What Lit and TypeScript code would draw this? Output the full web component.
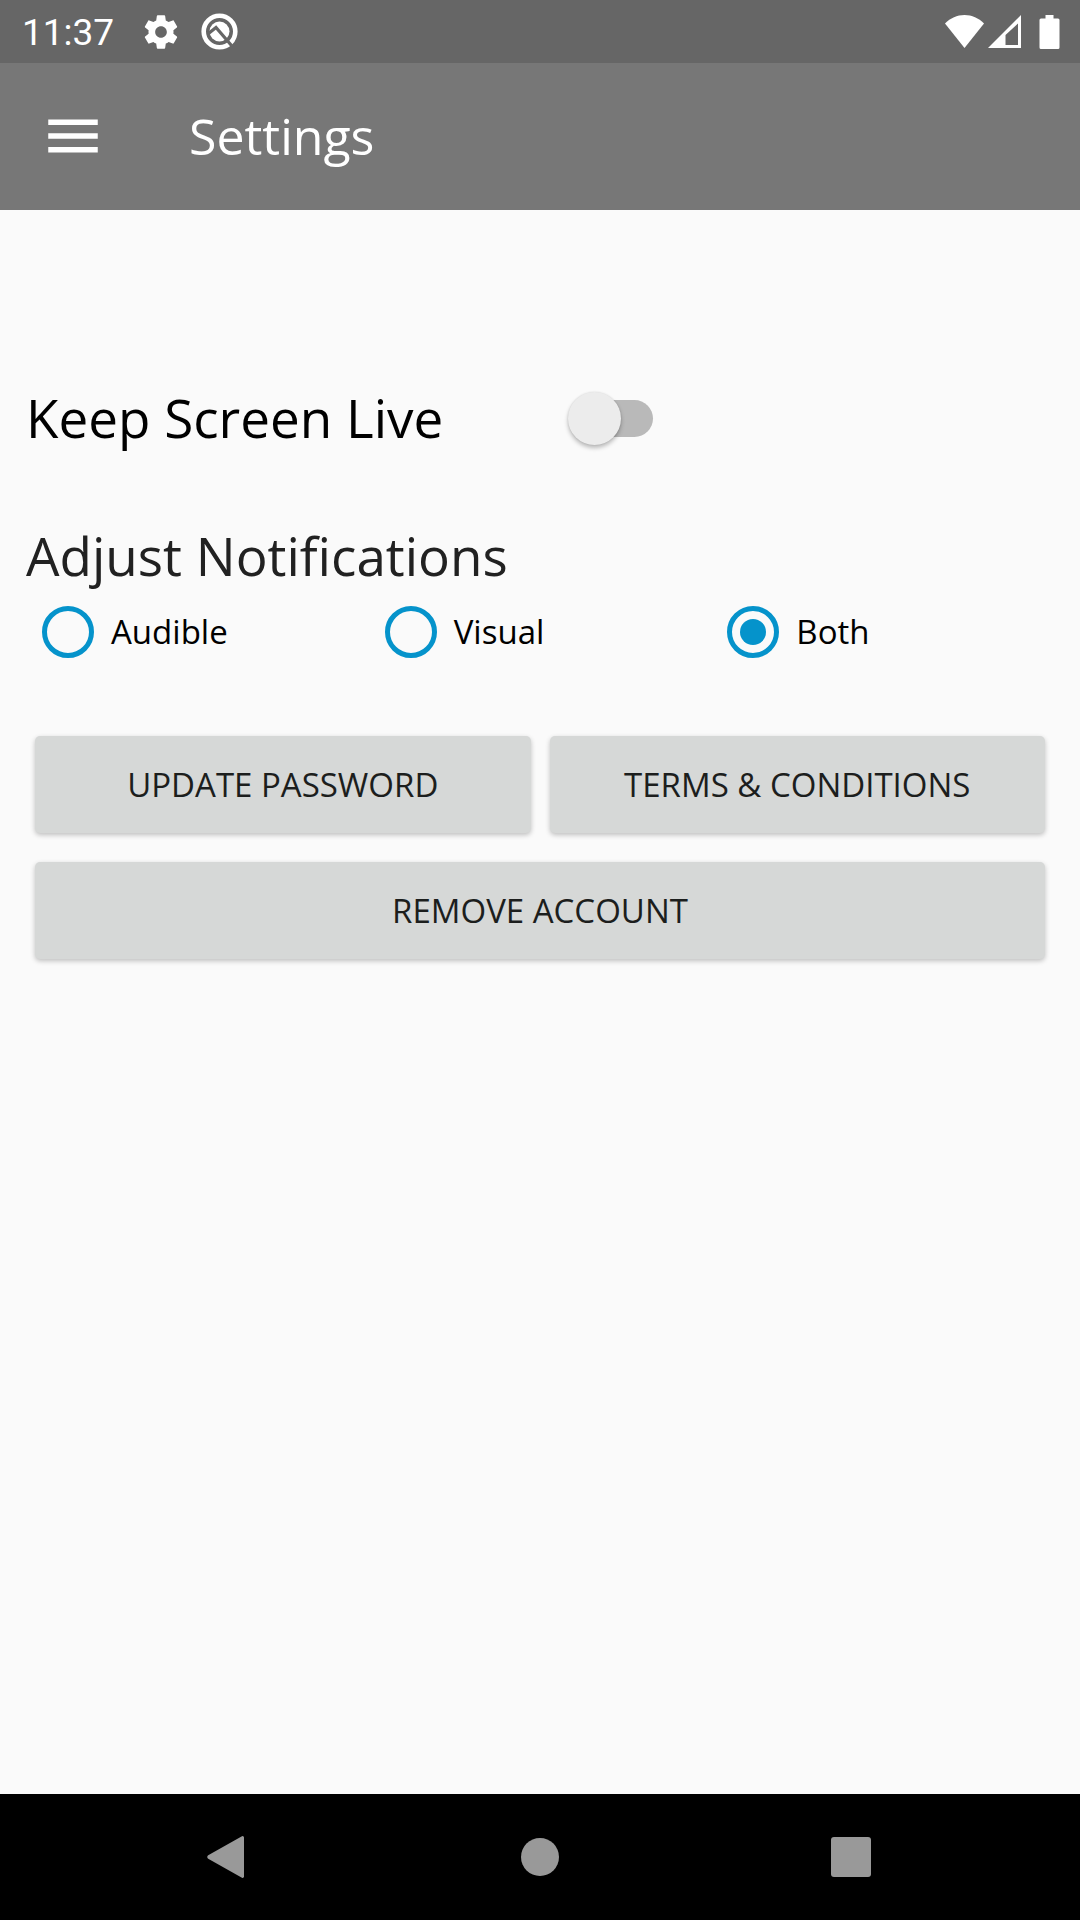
import { LitElement, html, svg, css } from "lit";
import { customElement, state } from "lit/decorators.js";

type NotificationMode = "Audible" | "Visual" | "Both";

const MODES: NotificationMode[] = ["Audible", "Visual", "Both"];

@customElement("status-bar")
class StatusBar extends LitElement {
  static styles = css`
    :host {
      display: flex;
      align-items: center;
      justify-content: space-between;
      height: 63px;
      padding: 0 20px 0 22px;
      background: #666666;
      color: #ffffff;
      box-sizing: border-box;
    }
    .group {
      display: flex;
      align-items: center;
    }
    .time {
      font: 400 37px/64px Roboto, sans-serif;
      padding-top: 2px;
      margin-right: 27px;
    }
    .gear {
      margin-right: 20px;
    }
    .wifi {
      margin-right: 4px;
    }
    .signal {
      margin-right: 18px;
    }
    svg {
      display: block;
      fill: currentColor;
    }
  `;

  render() {
    return html`
      <div class="group">
        <span class="time">11:37</span>
        <svg class="gear" width="40" height="40" viewBox="0 0 24 24" aria-hidden="true">
          <path
            d="M19.43 12.98c.04-.32.07-.64.07-.98s-.03-.66-.07-.98l2.11-1.65c.19-.15.24-.42.12-.64l-2-3.46c-.12-.22-.39-.3-.61-.22l-2.49 1c-.52-.4-1.08-.73-1.69-.98l-.38-2.65C14.46 2.18 14.25 2 14 2h-4c-.25 0-.46.18-.49.42l-.38 2.65c-.61.25-1.17.59-1.69.98l-2.49-1c-.23-.09-.49 0-.61.22l-2 3.46c-.13.22-.07.49.12.64l2.11 1.65c-.04.32-.07.65-.07.98s.03.66.07.98l-2.11 1.65c-.19.15-.24.42-.12.64l2 3.46c.12.22.39.3.61.22l2.49-1c.52.4 1.08.73 1.69.98l.38 2.65c.03.24.24.42.49.42h4c.25 0 .46-.18.49-.42l.38-2.65c.61-.25 1.17-.59 1.69-.98l2.49 1c.23.09.49 0 .61-.22l2-3.46c.12-.22.07-.49-.12-.64l-2.11-1.65zM12 15.5c-1.93 0-3.5-1.57-3.5-3.5s1.57-3.5 3.5-3.5 3.5 1.57 3.5 3.5-1.57 3.5-3.5 3.5z"
          />
        </svg>
        <svg width="37" height="37" viewBox="0 0 37 37" aria-hidden="true">
          <circle cx="18.500" cy="18.500" r="15.800" fill="none" stroke="currentColor" stroke-width="4.600" />
          <circle cx="18.500" cy="18.500" r="10" />
          <path d="M7.500 20.500 15 14.500 30.500 32.500" fill="none" stroke="#666666" stroke-width="3.200" />
        </svg>
      </div>
      <div class="group">
        <svg class="wifi" width="39" height="34" viewBox="0 0 39 34" aria-hidden="true">
          <path d="M0 8.500C5.500 3 12 0 19.500 0S33.500 3 39 8.500L19.500 33z" />
        </svg>
        <svg class="signal" width="33" height="34" viewBox="0 0 33 34" aria-hidden="true">
          <path fill-rule="evenodd" d="M33 0V33H0zM30 8.500 17.500 20V30H30z" />
        </svg>
        <svg width="21" height="34" viewBox="0 0 21 34" aria-hidden="true">
          <path d="M6.500 0h8v3.500H19a1.500 1.500 0 0 1 1.500 1.500v27.500A1.500 1.500 0 0 1 19 34H2A1.500 1.500 0 0 1 .5 32.500V5A1.500 1.500 0 0 1 2 3.500h4.500z" />
        </svg>
      </div>
    `;
  }
}

@customElement("app-bar")
class AppBar extends LitElement {
  static styles = css`
    :host {
      display: flex;
      align-items: center;
      gap: 83px;
      height: 147px;
      padding: 0 24px 2px 40px;
      background: #777777;
      color: #ffffff;
      box-sizing: border-box;
    }
    .menu {
      display: block;
      padding: 0;
      border: 0;
      background: none;
      color: inherit;
    }
    .menu svg {
      display: block;
      fill: currentColor;
    }
    .title {
      margin: 0;
      font: 400 50px/64px "Open Sans", sans-serif;
    }
  `;

  render() {
    return html`
      <button class="menu" type="button" aria-label="Open menu">
        <svg width="66" height="66" viewBox="0 0 24 24" aria-hidden="true">
          <path d="M3 18h18v-2H3v2zm0-5h18v-2H3v2zm0-7v2h18V6H3z" />
        </svg>
      </button>
      <h1 class="title">Settings</h1>
    `;
  }
}

@customElement("navigation-bar")
class NavigationBar extends LitElement {
  static styles = css`
    :host {
      display: grid;
      grid-template-columns: repeat(3, 1fr);
      height: 126px;
      padding: 0 73px;
      background: #000000;
      color: #999999;
      box-sizing: border-box;
    }
    button {
      display: grid;
      place-items: center;
      padding: 0;
      border: 0;
      background: none;
      color: inherit;
    }
    svg {
      display: block;
      fill: currentColor;
    }
  `;

  private button(label: string, shape: unknown) {
    return html`
      <button type="button" aria-label=${label}>
        <svg width="48" height="48" viewBox="0 0 48 48" aria-hidden="true">${shape}</svg>
      </button>
    `;
  }

  render() {
    return html`
      ${this.button("Back", svg`<path d="M36.500 3.400A1.500 1.500 0 0 1 39 4.600V43.400A1.500 1.500 0 0 1 36.500 44.600L3.200 25.700A2 2 0 0 1 3.200 22.300z" />`)}
      ${this.button("Home", svg`<circle cx="24" cy="24" r="19" />`)}
      ${this.button("Recent apps", svg`<rect x="4" y="4" width="40" height="40" rx="3" />`)}
    `;
  }
}

@customElement("app-root")
class AppRoot extends LitElement {
  static styles = css`
    :host {
      display: flex;
      flex-direction: column;
      min-height: 100vh;
      background: #fafafa;
      color: #000000;
      font-family: "Open Sans", sans-serif;
    }
    .content {
      flex: 1;
      padding: 172px 26px 0;
    }
    .live {
      display: flex;
      align-items: center;
      height: 72px;
    }
    .live-label {
      flex: 0 0 53%;
      font-size: 53px;
      line-height: 72px;
      white-space: nowrap;
    }
    .switch {
      appearance: none;
      display: flex;
      align-items: center;
      width: 80px;
      height: 37px;
      margin: 0 0 0 2px;
      border-radius: 19px;
      background: #b9b9b9;
    }
    .switch::before {
      content: "";
      flex: none;
      width: 53px;
      height: 53px;
      margin-left: -5px;
      border-radius: 50%;
      background: #ececec;
      box-shadow: 0 3px 4px rgba(0, 0, 0, 0.25), 0 0 2px rgba(0, 0, 0, 0.12);
    }
    .switch:checked::before {
      margin-left: 32px;
      background: #0593cb;
    }
    .notifications {
      margin: 66px 0 0;
      padding: 0;
      border: 0;
      min-width: 0;
    }
    .heading {
      padding: 0;
      color: #212121;
      font-size: 53px;
      line-height: 72px;
    }
    .modes {
      display: grid;
      grid-template-columns: repeat(3, 1fr);
      margin-top: 8px;
    }
    .mode {
      display: flex;
      align-items: center;
      gap: 17px;
      height: 64px;
      padding-left: 16px;
      font-size: 33px;
      line-height: 48px;
    }
    .radio {
      appearance: none;
      display: grid;
      place-items: center;
      width: 52px;
      height: 52px;
      margin: 0;
      border: 5px solid #0593cb;
      border-radius: 50%;
      box-sizing: border-box;
    }
    .radio:checked::before {
      content: "";
      width: 26px;
      height: 26px;
      border-radius: 50%;
      background: #0593cb;
    }
    .actions {
      display: grid;
      grid-template-columns: repeat(2, 1fr);
      gap: 29px 19px;
      margin-top: 72px;
      padding: 0 9px;
    }
    .action {
      height: 97px;
      padding: 0 16px;
      border: 0;
      border-radius: 5px;
      background: #d6d8d7;
      color: #1c1e1d;
      font: 400 33px/48px "Open Sans", sans-serif;
      text-transform: uppercase;
      box-shadow: 0 2px 5px rgba(0, 0, 0, 0.24);
    }
    .wide {
      grid-column: 1 / -1;
    }
  `;

  @state() private keepLive = false;
  @state() private mode: NotificationMode = "Both";

  render() {
    return html`
      <status-bar></status-bar>
      <app-bar></app-bar>
      <main class="content">
        <div class="live">
          <label class="live-label" for="keep-live">Keep Screen Live</label>
          <input
            class="switch"
            id="keep-live"
            type="checkbox"
            role="switch"
            .checked=${this.keepLive}
            @change=${(e: Event) => (this.keepLive = (e.target as HTMLInputElement).checked)}
          />
        </div>
        <fieldset class="notifications">
          <legend class="heading">Adjust Notifications</legend>
          <div class="modes">
            ${MODES.map(
              (mode) => html`
                <label class="mode">
                  <input
                    class="radio"
                    type="radio"
                    name="mode"
                    value=${mode}
                    .checked=${this.mode === mode}
                    @change=${() => (this.mode = mode)}
                  />
                  <span>${mode}</span>
                </label>
              `
            )}
          </div>
        </fieldset>
        <div class="actions">
          <button class="action" type="button">Update Password</button>
          <button class="action" type="button">Terms &amp; Conditions</button>
          <button class="action wide" type="button">Remove Account</button>
        </div>
      </main>
      <navigation-bar></navigation-bar>
    `;
  }
}
